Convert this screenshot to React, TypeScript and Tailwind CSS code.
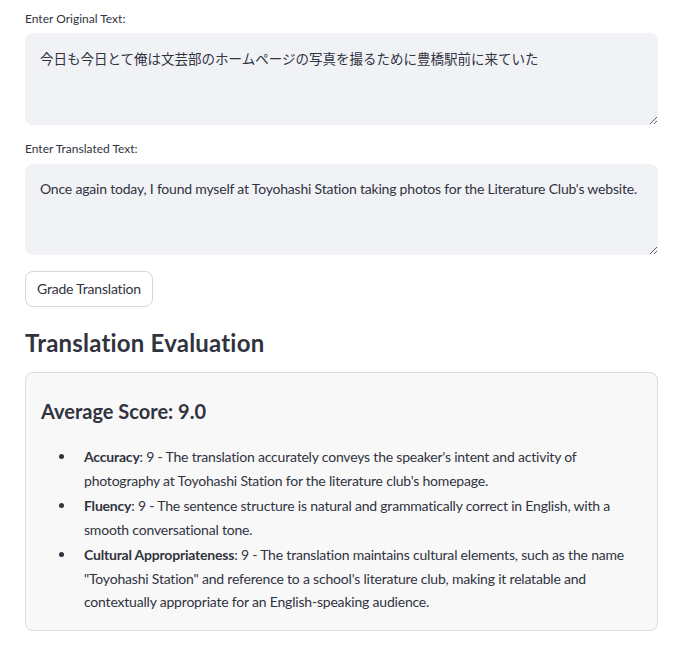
import React from "react";

const font = { fontFamily: '"Lato", "Noto Sans CJK JP", sans-serif' };

function Item({ title, children }: { title: string; children: React.ReactNode }) {
  return (
    <li className="flex">
      <span className="shrink-0 w-[5px] h-[5px] rounded-full bg-[#31333f] ml-[18px] mr-[20px] mt-[9px]" />
      <span>
        <b className="font-bold">{title}</b>
        {children}
      </span>
    </li>
  );
}

export default function App() {
  return (
    <div className="min-h-screen bg-white text-[#31333f] px-[25px] pt-[11px] tracking-[-0.2px]" style={font}>
      <label className="block text-[12px] leading-[16px] mb-[6px] tracking-normal">Enter Original Text:</label>
      <textarea
        readOnly
        defaultValue="今日も今日とて俺は文芸部のホームページの写真を撮るために豊橋駅前に来ていた"
        className="block w-[633px] h-[92px] bg-[#f0f2f6] rounded-[8px] px-[15px] py-[15px] text-[13.5px] leading-[21px] tracking-normal text-[#31333f] outline-none resize-y"
        style={{ fontFamily: '"Noto Sans CJK JP", sans-serif' }}
      />
      <label className="block text-[12px] leading-[16px] mt-[16px] mb-[7px] tracking-normal">Enter Translated Text:</label>
      <textarea
        readOnly
        defaultValue="Once again today, I found myself at Toyohashi Station taking photos for the Literature Club's website."
        className="block w-[633px] h-[91px] bg-[#f0f2f6] rounded-[8px] px-[15px] py-[14px] text-[14px] leading-[21px] text-[#31333f] outline-none resize-y"
      />
      <button className="mt-[16px] h-[36px] px-[11px] border border-[#d6d6d9] rounded-[8px] bg-white text-[14px] leading-[20px] text-[#31333f]">
        Grade Translation
      </button>
      <h2 className="mt-[20px] text-[24px] leading-[32px] font-bold tracking-[0.2px]">Translation Evaluation</h2>
      <div className="mt-[13px] w-[633px] border border-[#dcdcde] rounded-[8px] bg-[#f8f8f8] px-[15px] pt-[24px] pb-[16px]">
        <h3 className="text-[20px] leading-[28px] font-bold tracking-normal">Average Score: 9.0</h3>
        <ul className="mt-[20px] text-[14px] leading-[23.5px] flex flex-col gap-[2px]">
          <Item title="Accuracy">
            : 9 - The translation accurately conveys the speaker's intent and activity of photography at Toyohashi Station for the literature club's homepage.
          </Item>
          <Item title="Fluency">
            : 9 - The sentence structure is natural and grammatically correct in English, with a smooth conversational tone.
          </Item>
          <Item title="Cultural Appropriateness">
            : 9 - The translation maintains cultural elements, such as the name "Toyohashi Station" and reference to a school's literature club, making it relatable and contextually appropriate for an English-speaking audience.
          </Item>
        </ul>
      </div>
    </div>
  );
}
